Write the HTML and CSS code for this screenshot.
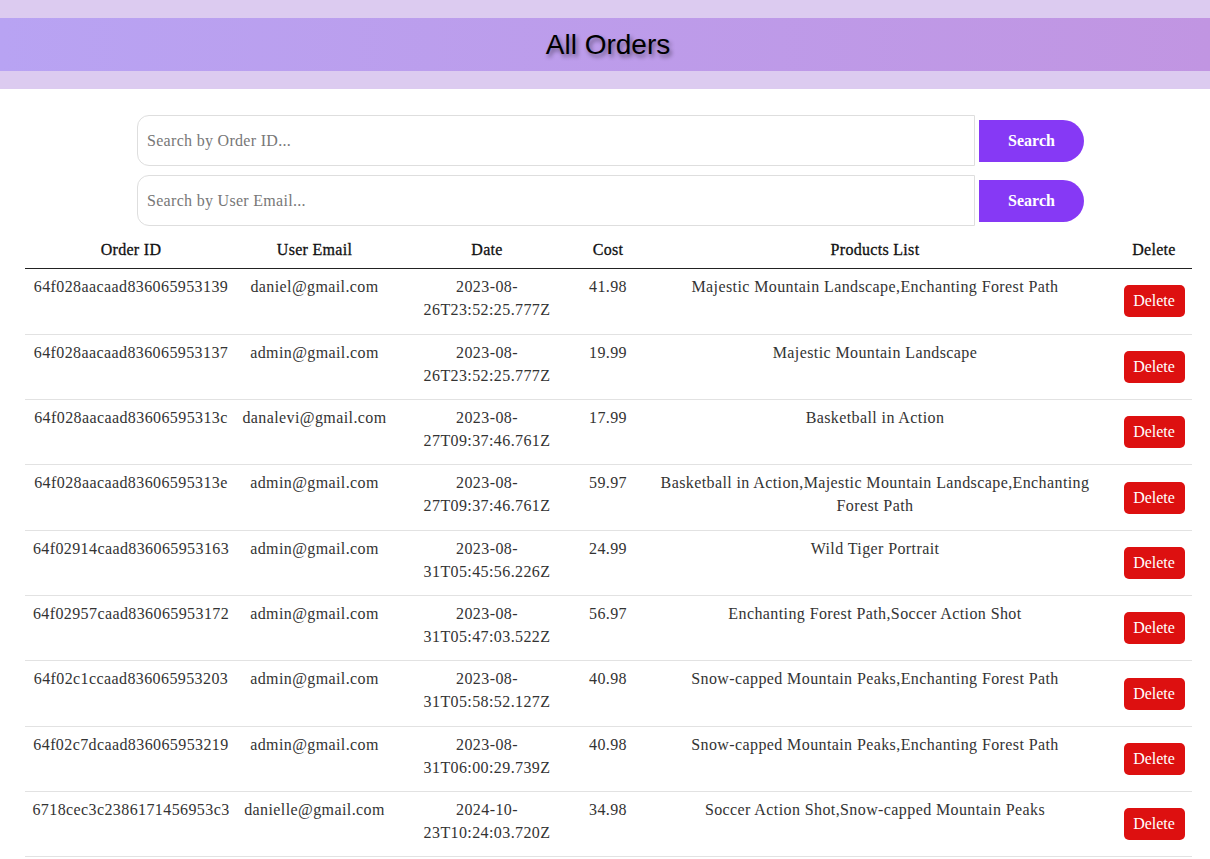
FILE: index.html
```html
<!DOCTYPE html>
<html>
<head>
<meta charset="utf-8">
<link rel="stylesheet" href="styles.css">
</head>
<body>
<header class="top">
  <h1 class="title">All Orders</h1>
</header>
<main class="page">
  <form class="search-row">
    <input class="search-input" type="text" placeholder="Search by Order ID...">
    <button class="search-btn" type="button">Search</button>
  </form>
  <form class="search-row">
    <input class="search-input" type="text" placeholder="Search by User Email...">
    <button class="search-btn" type="button">Search</button>
  </form>
  <table class="orders">
    <colgroup>
      <col class="c-id"><col class="c-email"><col class="c-date"><col class="c-cost"><col class="c-prod"><col class="c-del">
    </colgroup>
    <thead>
      <tr><th>Order ID</th><th>User Email</th><th>Date</th><th>Cost</th><th>Products List</th><th>Delete</th></tr>
    </thead>
    <tbody>
      <tr><td>64f028aacaad836065953139</td><td>daniel@gmail.com</td><td><div class="date">2023-08-26T23:52:25.777Z</div></td><td>41.98</td><td class="prod">Majestic Mountain Landscape,Enchanting Forest Path</td><td><button class="del">Delete</button></td></tr>
      <tr><td>64f028aacaad836065953137</td><td>admin@gmail.com</td><td><div class="date">2023-08-26T23:52:25.777Z</div></td><td>19.99</td><td class="prod">Majestic Mountain Landscape</td><td><button class="del">Delete</button></td></tr>
      <tr><td>64f028aacaad83606595313c</td><td>danalevi@gmail.com</td><td><div class="date">2023-08-27T09:37:46.761Z</div></td><td>17.99</td><td class="prod">Basketball in Action</td><td><button class="del">Delete</button></td></tr>
      <tr><td>64f028aacaad83606595313e</td><td>admin@gmail.com</td><td><div class="date">2023-08-27T09:37:46.761Z</div></td><td>59.97</td><td class="prod">Basketball in Action,Majestic Mountain Landscape,Enchanting Forest Path</td><td><button class="del">Delete</button></td></tr>
      <tr><td>64f02914caad836065953163</td><td>admin@gmail.com</td><td><div class="date">2023-08-31T05:45:56.226Z</div></td><td>24.99</td><td class="prod">Wild Tiger Portrait</td><td><button class="del">Delete</button></td></tr>
      <tr><td>64f02957caad836065953172</td><td>admin@gmail.com</td><td><div class="date">2023-08-31T05:47:03.522Z</div></td><td>56.97</td><td class="prod">Enchanting Forest Path,Soccer Action Shot</td><td><button class="del">Delete</button></td></tr>
      <tr><td>64f02c1ccaad836065953203</td><td>admin@gmail.com</td><td><div class="date">2023-08-31T05:58:52.127Z</div></td><td>40.98</td><td class="prod">Snow-capped Mountain Peaks,Enchanting Forest Path</td><td><button class="del">Delete</button></td></tr>
      <tr><td>64f02c7dcaad836065953219</td><td>admin@gmail.com</td><td><div class="date">2023-08-31T06:00:29.739Z</div></td><td>40.98</td><td class="prod">Snow-capped Mountain Peaks,Enchanting Forest Path</td><td><button class="del">Delete</button></td></tr>
      <tr><td>6718cec3c2386171456953c3</td><td>danielle@gmail.com</td><td><div class="date">2024-10-23T10:24:03.720Z</div></td><td>34.98</td><td class="prod">Soccer Action Shot,Snow-capped Mountain Peaks</td><td><button class="del">Delete</button></td></tr>
    </tbody>
  </table>
</main>
</body>
</html>
```
FILE: styles.css
```css
* { box-sizing: border-box; }
body {
  margin: 0;
  font-family: "Liberation Serif", serif;
  color: #333;
  background: #fff;
}
.top {
  background: #dccbf0;
  padding: 18px 0;
}
.title {
  margin: 0;
  height: 53px;
  line-height: 53px;
  padding-left: 6px;
  text-align: center;
  font-family: "Liberation Sans", Arial, sans-serif;
  font-weight: normal;
  font-size: 28px;
  color: #000;
  text-shadow: 2px 3px 4px rgba(0,0,0,0.45);
  background: linear-gradient(90deg, #b8a3f3 0%, #c195e2 100%);
}
.page {
  padding: 26px 18px 0 25px;
}
.search-row {
  display: flex;
  align-items: center;
  margin: 0 0 9px 112px;
  gap: 4px;
}
.search-input {
  width: 838px;
  height: 51px;
  border: 1px solid #dedede;
  border-radius: 12px 0 0 12px;
  padding: 0 9px;
  font-family: "Liberation Serif", serif;
  font-size: 16px;
  letter-spacing: 0.3px;
  color: #333;
  outline: none;
}
.search-input::placeholder { color: #777; }
.search-btn {
  width: 105px;
  height: 42px;
  border: none;
  background: #8639f5;
  color: #fff;
  font-family: "Liberation Serif", serif;
  font-weight: bold;
  font-size: 16px;
  border-radius: 0 22px 22px 0;
  padding: 0;
}
.orders {
  width: 1167px;
  border-collapse: collapse;
  table-layout: fixed;
  margin-top: 0;
}
.c-id { width: 212px; }
.c-email { width: 155px; }
.c-date { width: 190px; }
.c-cost { width: 52px; }
.c-prod { width: 482px; }
.c-del { width: 76px; }
.orders th {
  font-weight: normal;
  color: #111;
  font-size: 16px;
  letter-spacing: 0.3px;
  height: 33px;
  padding: 4px 0 6px;
  border-bottom: 1px solid #222;
  text-align: center;
  -webkit-text-stroke: 0.3px #111;
}
.orders td {
  text-align: center;
  vertical-align: top;
  font-size: 16px;
  letter-spacing: 0.4px;
  line-height: 23px;
  padding: 6px 0 10px;
  height: 65.35px;
  border-bottom: 1px solid #e2e2e2;
  color: #333;
}
.orders tbody tr:first-child td { height: 66.2px; }
.orders td.prod { padding-left: 20px; padding-right: 20px; }
.date { max-width: 140px; margin: 0 auto; }
.orders td:last-child { vertical-align: middle; padding: 0; }
.del {
  background: #dd1010;
  color: #fff;
  border: none;
  border-radius: 5px;
  width: 61px;
  height: 32px;
  font-family: "Liberation Serif", serif;
  font-size: 16px;
  padding: 0;
}
```
